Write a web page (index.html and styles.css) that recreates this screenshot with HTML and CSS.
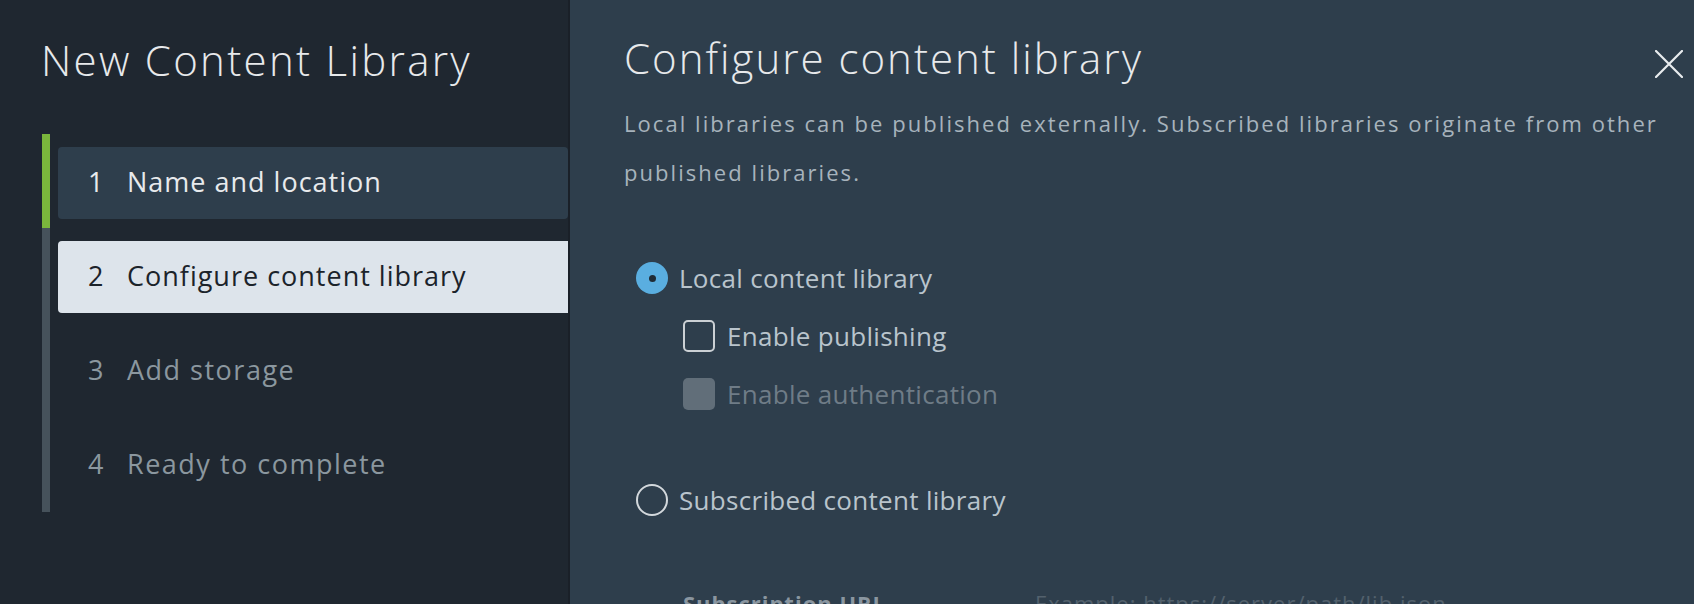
FILE: index.html
```html
<!DOCTYPE html>
<html lang="en">
<head>
<meta charset="utf-8">
<title>New Content Library</title>
<link rel="stylesheet" href="styles.css">
</head>
<body>
<div class="wizard">
  <aside class="side">
    <h1 class="side-title">New Content Library</h1>
    <div class="stepper">
      <div class="track">
        <div class="track-done"></div>
        <div class="track-rest"></div>
      </div>
      <ol class="steps">
        <li class="step step-done"><span class="num">1</span><span class="label">Name and location</span></li>
        <li class="step step-current"><span class="num">2</span><span class="label">Configure content library</span></li>
        <li class="step step-todo"><span class="num">3</span><span class="label">Add storage</span></li>
        <li class="step step-todo"><span class="num">4</span><span class="label">Ready to complete</span></li>
      </ol>
    </div>
  </aside>
  <main class="content">
    <header class="content-head">
      <h2 class="content-title">Configure content library</h2>
      <button class="close" aria-label="Close">
        <svg width="28" height="28" viewBox="0 0 28 28"><path d="M1 1 L27 27 M27 1 L1 27" stroke="#e9ecef" stroke-width="2.2" fill="none" stroke-linecap="round"/></svg>
      </button>
    </header>
    <p class="desc">Local libraries can be published externally. Subscribed libraries originate from other published libraries.</p>
    <div class="options">
      <label class="opt radio-row">
        <span class="radio radio-on"><span class="dot"></span></span>
        <span class="opt-text">Local content library</span>
      </label>
      <label class="opt check-row">
        <span class="check"></span>
        <span class="opt-text">Enable publishing</span>
      </label>
      <label class="opt check-row disabled">
        <span class="check check-disabled"></span>
        <span class="opt-text">Enable authentication</span>
      </label>
      <label class="opt radio-row sub-row">
        <span class="radio"></span>
        <span class="opt-text">Subscribed content library</span>
      </label>
      <div class="url-row">
        <span class="url-label">Subscription URL</span>
        <span class="url-input">Example: https://server/path/lib.json</span>
      </div>
    </div>
  </main>
</div>
</body>
</html>
```
FILE: styles.css
```css
html, body {
  margin: 0;
  padding: 0;
  height: 100%;
  overflow: hidden;
}
body {
  font-family: "Open Sans", "Noto Sans", sans-serif;
  background: #1f2730;
}
.wizard {
  display: flex;
  height: 604px;
}
.side {
  width: 568px;
  flex: none;
  background: #1f2730;
  border-right: 2px solid #1a2028;
}
.side-title {
  margin: 0;
  padding: 35px 0 0 41px;
  font-size: 42px;
  line-height: 50px;
  font-weight: 300;
  color: #e7e9eb;
  letter-spacing: 2.3px;
  white-space: nowrap;
}
.stepper {
  display: flex;
  margin-top: 49px;
  margin-left: 42px;
}
.track {
  width: 8px;
  flex: none;
  display: flex;
  flex-direction: column;
}
.track-done {
  height: 94px;
  background: #7ab63c;
}
.track-rest {
  flex: 1;
  background: #46525b;
}
.steps {
  list-style: none;
  margin: 0 0 0 8px;
  padding: 13px 0 11px;
  flex: 1;
  display: flex;
  flex-direction: column;
  gap: 22px;
}
.step {
  height: 72px;
  box-sizing: border-box;
  display: flex;
  align-items: center;
  padding: 0 0 4px 30px;
  border-radius: 4px 0 0 4px;
  font-size: 27px;
  letter-spacing: 1px;
  color: #8b979f;
  white-space: nowrap;
}
.step-todo .label {
  letter-spacing: 1.5px;
}
.num {
  width: 39px;
  flex: none;
  letter-spacing: 0;
}
.step-done {
  background: #2e3e4c;
  color: #e8eaec;
  border-radius: 4px;
}
.step-current {
  background: #dde4eb;
  color: #1b232a;
}
.content {
  flex: 1;
  background: #2e3e4c;
  padding: 33px 11px 0 54px;
  min-width: 0;
}
.content-head {
  display: flex;
  justify-content: space-between;
  align-items: flex-start;
}
.content-title {
  margin: 0;
  font-size: 42px;
  line-height: 50px;
  font-weight: 300;
  color: #e7e9eb;
  letter-spacing: 2px;
  white-space: nowrap;
}
.close {
  margin-top: 17px;
  padding: 0;
  border: 0;
  background: none;
  width: 28px;
  height: 28px;
  display: block;
}
.close svg {
  display: block;
}
.desc {
  margin: 16px 0 0;
  width: 1075px;
  font-size: 22px;
  line-height: 49px;
  letter-spacing: 2.05px;
  color: #a7b3bc;
}
.options {
  display: flex;
  flex-direction: column;
  margin-top: 65px;
  padding-left: 12px;
}
.opt {
  display: flex;
  align-items: center;
  height: 32px;
  font-size: 26px;
  line-height: 32px;
  letter-spacing: 0.3px;
  color: #b9c4cc;
  white-space: nowrap;
}
.check-row {
  margin-top: 26px;
  padding-left: 47px;
}
.sub-row {
  margin-top: 74px;
}
.radio {
  width: 32px;
  height: 32px;
  box-sizing: border-box;
  border-radius: 50%;
  border: 2px solid #d3d8dc;
  flex: none;
  margin-right: 11px;
  display: flex;
  align-items: center;
  justify-content: center;
}
.radio-on {
  border: 0;
  background: #5aaee0;
}
.dot {
  width: 7px;
  height: 7px;
  border-radius: 50%;
  background: #1f2b35;
}
.check {
  width: 32px;
  height: 32px;
  box-sizing: border-box;
  border: 2px solid #cbd0d4;
  border-radius: 5px;
  flex: none;
  margin-right: 12px;
}
.check-disabled {
  border: 0;
  background: #616e79;
}
.disabled {
  color: #6f7c87;
}
.url-row {
  display: flex;
  margin-top: 72px;
  padding-left: 47px;
  font-size: 22px;
  line-height: 30px;
  letter-spacing: 1px;
  white-space: nowrap;
}
.url-label {
  width: 352px;
  flex: none;
  font-weight: 700;
  color: #8a96a0;
}
.url-input {
  color: #53616d;
}
```
